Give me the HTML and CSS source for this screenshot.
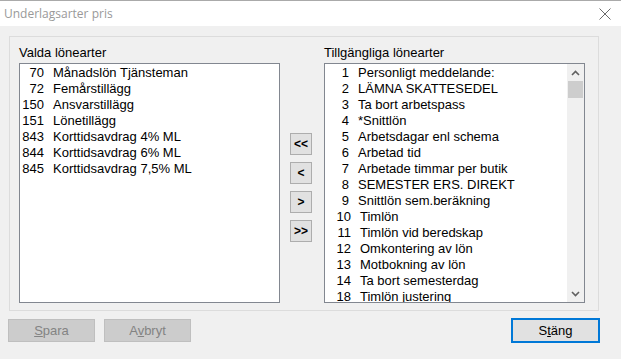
FILE: index.html
```html
<!DOCTYPE html>
<html lang="sv">
<head>
  <meta charset="UTF-8" />
  <title>Underlagsarter pris</title>
  <link rel="stylesheet" href="styles.css">
</head>
<body>

  <div class="titlebar">
    <span class="title">Underlagsarter pris</span>
    <svg class="close" width="12" height="12" viewBox="0 0 12 12">
      <path d="M0.5 0.5 L11.5 11.5 M11.5 0.5 L0.5 11.5" stroke="#6a6a6a" stroke-width="1" fill="none"/>
    </svg>
  </div>

  <div class="group">
    <div class="column">
      <div class="label">Valda lönearter</div>
      <div class="listbox">
        <ul class="items">
          <li><span class="num">70</span>Månadslön Tjänsteman</li>
          <li><span class="num">72</span>Femårstillägg</li>
          <li><span class="num">150</span>Ansvarstillägg</li>
          <li><span class="num">151</span>Lönetillägg</li>
          <li><span class="num">843</span>Korttidsavdrag 4% ML</li>
          <li><span class="num">844</span>Korttidsavdrag 6% ML</li>
          <li><span class="num">845</span>Korttidsavdrag 7,5% ML</li>
        </ul>
      </div>
    </div>

    <div class="movers">
      <button class="mbtn">&lt;&lt;</button>
      <button class="mbtn">&lt;</button>
      <button class="mbtn">&gt;</button>
      <button class="mbtn">&gt;&gt;</button>
    </div>

    <div class="column">
      <div class="label">Tillgängliga lönearter</div>
      <div class="listbox">
        <ul class="items">
          <li><span class="num">1</span>Personligt meddelande:</li>
          <li><span class="num">2</span>LÄMNA SKATTESEDEL</li>
          <li><span class="num">3</span>Ta bort arbetspass</li>
          <li><span class="num">4</span>*Snittlön</li>
          <li><span class="num">5</span>Arbetsdagar enl schema</li>
          <li><span class="num">6</span>Arbetad tid</li>
          <li><span class="num">7</span>Arbetade timmar per butik</li>
          <li><span class="num">8</span>SEMESTER ERS. DIREKT</li>
          <li><span class="num">9</span>Snittlön sem.beräkning</li>
          <li><span class="num wide">10</span>Timlön</li>
          <li><span class="num wide">11</span>Timlön vid beredskap</li>
          <li><span class="num wide">12</span>Omkontering av lön</li>
          <li><span class="num wide">13</span>Motbokning av lön</li>
          <li><span class="num wide">14</span>Ta bort semesterdag</li>
          <li><span class="num wide">18</span>Timlön justering</li>
        </ul>
        <div class="scrollbar">
          <div class="arrow">
            <svg width="9" height="6" viewBox="0 0 9 6"><path d="M1 5 L4.5 1.5 L8 5" stroke="#606060" stroke-width="1.6" fill="none"/></svg>
          </div>
          <div class="thumb"></div>
          <div class="track"></div>
          <div class="arrow">
            <svg width="9" height="6" viewBox="0 0 9 6"><path d="M1 1 L4.5 4.5 L8 1" stroke="#606060" stroke-width="1.6" fill="none"/></svg>
          </div>
        </div>
      </div>
    </div>
  </div>

  <div class="footer">
    <button class="btn disabled"><u>S</u>para</button>
    <button class="btn disabled">A<u>v</u>bryt</button>
    <button class="btn default">S<u>t</u>äng</button>
  </div>

</body>
</html>
```

FILE: styles.css
```css
body {
  margin: 0;
  padding: 0;
  width: 621px;
  height: 359px;
  overflow: hidden;
  background: #f0f0f0;
  font-family: 'Liberation Sans', Arial, sans-serif;
  font-size: 13px;
  color: #000;
}

.titlebar {
  height: 25px;
  background: #fff;
  border-top: 1px solid #aaaaaa;
  display: flex;
  align-items: center;
  justify-content: space-between;
  padding: 0 10px 0 4px;
}

.title {
  font-family: 'Open Sans', 'Noto Sans', sans-serif;
  font-size: 12px;
  color: #999;
}

.close {
  margin-top: 1px;
}

.group {
  margin: 10px 0 0 9px;
  width: 590px;
  height: 275px;
  box-sizing: border-box;
  border: 1px solid #dcdcdc;
  padding: 8px 0 0 9px;
  display: flex;
}

.column {
  display: flex;
  flex-direction: column;
}

.label {
  line-height: 16px;
  height: 16px;
  margin-bottom: 2px;
}

.listbox {
  width: 261px;
  height: 240px;
  box-sizing: border-box;
  border: 1px solid #828790;
  background: #fff;
  display: flex;
  overflow: hidden;
}

.items {
  list-style: none;
  margin: 0;
  padding: 1px 0 0 0;
  flex: 1;
  overflow: hidden;
}

.items li {
  line-height: 16px;
  height: 16px;
  white-space: nowrap;
  display: flex;
}

.num {
  width: 24px;
  text-align: right;
  margin-right: 9px;
}

.num.wide {
  width: 26px;
}

.movers {
  width: 44px;
  padding: 88px 0 0 10px;
  box-sizing: border-box;
  display: flex;
  flex-direction: column;
  gap: 7px;
}

.mbtn {
  width: 22px;
  height: 22px;
  padding: 0;
  background: #e1e1e1;
  border: 1px solid #adadad;
  font-family: 'Liberation Sans', Arial, sans-serif;
  font-size: 12px;
  font-weight: bold;
  color: #000;
  line-height: 18px;
}

.scrollbar {
  width: 17px;
  background: #f0f0f0;
  display: flex;
  flex-direction: column;
}

.arrow {
  height: 17px;
  display: flex;
  align-items: center;
  justify-content: center;
}

.thumb {
  height: 17px;
  margin: 0 1px 0 1px;
  background: #cdcdcd;
}

.track {
  flex: 1;
}

.footer {
  display: flex;
  gap: 9px;
  padding: 8px 21px 0 8px;
}

.btn {
  width: 87px;
  height: 23px;
  box-sizing: border-box;
  font-family: 'Liberation Sans', Arial, sans-serif;
  font-size: 13px;
  padding: 0;
  background: #e1e1e1;
  border: 1px solid #adadad;
  color: #000;
}

.btn.disabled {
  background: #cccccc;
  border-color: #bfbfbf;
  color: #838383;
}

.btn.default {
  margin-left: auto;
  width: 89px;
  height: 25px;
  margin-top: -1px;
  border: 2px solid #0078d7;
}
```
